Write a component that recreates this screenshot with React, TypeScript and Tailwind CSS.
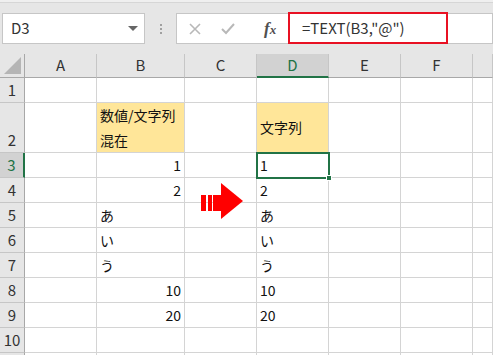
import React from 'react';

const font = { fontFamily: '"Noto Sans CJK JP", "Noto Sans", sans-serif' };

const cols = ['A', 'B', 'C', 'D', 'E', 'F', ''];

type Cell = { text?: React.ReactNode; align?: 'left' | 'right'; fill?: boolean };

const rows: { n: string; h: string; cells: Record<string, Cell> }[] = [
  { n: '1', h: 'h-[25px]', cells: {} },
  {
    n: '2',
    h: 'h-[50px]',
    cells: {
      B: { text: <>数値/文字列<br />混在</>, fill: true },
      D: { text: '文字列', fill: true },
    },
  },
  { n: '3', h: 'h-[25px]', cells: { B: { text: '1', align: 'right' }, D: { text: '1' } } },
  { n: '4', h: 'h-[25px]', cells: { B: { text: '2', align: 'right' }, D: { text: '2' } } },
  { n: '5', h: 'h-[25px]', cells: { B: { text: 'あ' }, D: { text: 'あ' } } },
  { n: '6', h: 'h-[25px]', cells: { B: { text: 'い' }, D: { text: 'い' } } },
  { n: '7', h: 'h-[25px]', cells: { B: { text: 'う' }, D: { text: 'う' } } },
  { n: '8', h: 'h-[25px]', cells: { B: { text: '10', align: 'right' }, D: { text: '10' } } },
  { n: '9', h: 'h-[25px]', cells: { B: { text: '20', align: 'right' }, D: { text: '20' } } },
  { n: '10', h: 'h-[25px]', cells: {} },
  { n: '', h: 'h-[25px]', cells: {} },
];

function Toolbar() {
  return (
    <div className="h-[54px] flex flex-col">
      <div className="h-[3px] bg-[#efefef] border-b border-[#d6d6d6]" />
      <div className="flex items-start pt-[10px]">
        <div className="ml-[2px] w-[143px] h-[31px] bg-white border border-[#c6c6c6] flex items-center justify-between pl-[8px] pr-[6px]">
          <span className="text-[15px] text-[#333]">D3</span>
          <span className="w-0 h-0 border-l-[5px] border-r-[5px] border-t-[5px] border-l-transparent border-r-transparent border-t-[#666]" />
        </div>
        <div className="w-[31px] h-[31px] flex flex-col items-center justify-center gap-[2px]">
          <span className="w-[2px] h-[2px] bg-[#a0a0a0]" />
          <span className="w-[2px] h-[2px] bg-[#a0a0a0]" />
          <span className="w-[2px] h-[2px] bg-[#a0a0a0]" />
        </div>
        <div className="w-[112px] h-[31px] bg-white border border-r-0 border-[#c6c6c6] flex items-center pl-[12px] gap-[20px]">
          <svg width="12" height="12" viewBox="0 0 12 12">
            <path d="M1 1 L11 11 M11 1 L1 11" stroke="#b8b8b8" strokeWidth="1.6" />
          </svg>
          <svg width="14" height="12" viewBox="0 0 14 12">
            <path d="M1 6 L5 10 L13 1" stroke="#b8b8b8" strokeWidth="2" fill="none" />
          </svg>
          <span
            className="ml-[9px] text-[17px] italic font-bold text-[#505050] leading-none"
            style={{ fontFamily: '"Liberation Serif", serif' }}
          >
            f<span className="text-[13px]">x</span>
          </span>
        </div>
        <div className="w-[160px] h-[32px] -mt-[1px] bg-white border-2 border-[#e81123] flex items-center pl-[12px]">
          <span className="text-[15px] text-[#333]">=TEXT(B3,"@")</span>
        </div>
        <div className="flex-1 h-[31px] bg-white border border-l-0 border-[#c6c6c6]" />
      </div>
    </div>
  );
}

function Arrow() {
  return (
    <svg className="absolute left-[201px] top-[183px]" width="43" height="37" viewBox="0 0 43 37">
      <rect x="0" y="12" width="5" height="16" fill="#ff0000" />
      <rect x="7" y="12" width="4" height="16" fill="#ff0000" />
      <rect x="12" y="12" width="9" height="16" fill="#ff0000" />
      <path d="M20 0 L42 18 L20 36 Z" fill="#ff0000" />
    </svg>
  );
}

export default function App() {
  return (
    <div className="w-[493px] h-[355px] overflow-hidden bg-[#e6e6e6] relative" style={font}>
      <Toolbar />
      <div className="grid grid-cols-[25px_72px_88px_72px_72px_72px_72px_1fr]">
        <div className="h-[24px] border-r border-b border-[#a8a8a8] bg-[#e6e6e6] relative">
          <svg className="absolute right-[3px] bottom-[3px]" width="17" height="17" viewBox="0 0 17 17">
            <path d="M17 0 L17 17 L0 17 Z" fill="#b5b5b5" />
          </svg>
        </div>
        {cols.map((c) => (
          <div
            key={c || 'g'}
            className={
              c === 'D'
                ? 'h-[24px] bg-[#d2d2d2] border-r border-[#c6c6c6] border-b-2 border-b-[#217346] flex items-center justify-center text-[15px] text-[#217346]'
                : 'h-[24px] border-r border-[#c6c6c6] border-b border-b-[#a8a8a8] flex items-center justify-center text-[15px] text-[#333]'
            }
          >
            {c}
          </div>
        ))}
        {rows.map((r) => (
          <React.Fragment key={r.n || 'x'}>
            <div
              className={
                r.n === '3'
                  ? `${r.h} bg-[#d2d2d2] border-b border-[#c6c6c6] border-r-2 border-r-[#217346] flex items-end justify-center pb-[1px] text-[15px] text-[#217346]`
                  : `${r.h} bg-[#e6e6e6] border-b border-[#c6c6c6] border-r border-r-[#a8a8a8] flex items-end justify-center pb-[1px] text-[15px] text-[#333]`
              }
            >
              {r.n}
            </div>
            {cols.map((c) => {
              const cell = r.cells[c];
              return (
                <div
                  key={c || 'g'}
                  className={`${r.h} border-r border-b border-[#d4d4d4] flex items-center px-[3px] text-[14px] leading-[25px] text-[#111] ${
                    cell?.fill ? 'bg-[#ffe699]' : 'bg-white'
                  } ${cell?.align === 'right' ? 'justify-end' : 'justify-start'}`}
                >
                  {cell?.text && <span className="whitespace-nowrap">{cell.text}</span>}
                </div>
              );
            })}
          </React.Fragment>
        ))}
      </div>
      <div className="absolute left-[256px] top-[152px] w-[74px] h-[27px] border-2 border-[#217346]">
        <div className="absolute -right-[4px] -bottom-[4px] w-[6px] h-[6px] bg-[#217346] border border-white" />
      </div>
      <Arrow />
    </div>
  );
}
